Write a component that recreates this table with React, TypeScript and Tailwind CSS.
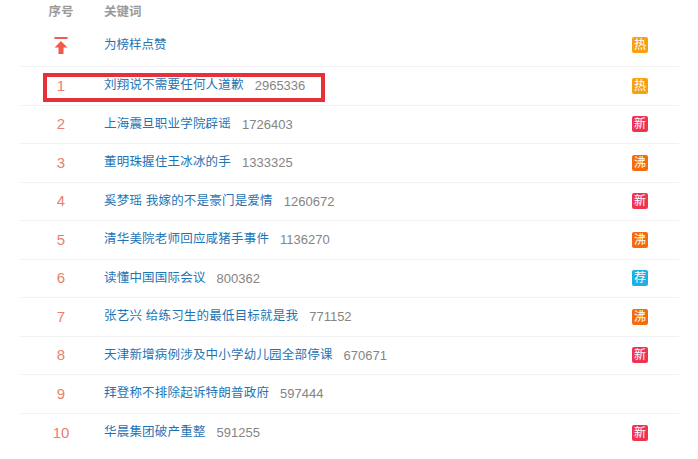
import React from "react";

type Row = { rank: string; kw: string; num?: string; tag?: "热" | "新" | "沸" | "荐" };

const rows: Row[] = [
  { rank: "1", kw: "刘翔说不需要任何人道歉", num: "2965336", tag: "热" },
  { rank: "2", kw: "上海震旦职业学院辟谣", num: "1726403", tag: "新" },
  { rank: "3", kw: "董明珠握住王冰冰的手", num: "1333325", tag: "沸" },
  { rank: "4", kw: "奚梦瑶 我嫁的不是豪门是爱情", num: "1260672", tag: "新" },
  { rank: "5", kw: "清华美院老师回应咸猪手事件", num: "1136270", tag: "沸" },
  { rank: "6", kw: "读懂中国国际会议", num: "800362", tag: "荐" },
  { rank: "7", kw: "张艺兴 给练习生的最低目标就是我", num: "771152", tag: "沸" },
  { rank: "8", kw: "天津新增病例涉及中小学幼儿园全部停课", num: "670671", tag: "新" },
  { rank: "9", kw: "拜登称不排除起诉特朗普政府", num: "597444" },
  { rank: "10", kw: "华晨集团破产重整", num: "591255", tag: "新" },
];

function Tag({ t }: { t?: Row["tag"] }) {
  if (!t) return null;
  const cls =
    t === "热"
      ? "bg-[#f7a10f]"
      : t === "新"
      ? "bg-[#ee3450]"
      : t === "沸"
      ? "bg-[#f56b10]"
      : "bg-[#1bb0e6]";
  return (
    <span
      className={`${cls} inline-flex h-[16px] w-[16px] items-center justify-center rounded-[2px] text-[12px] leading-none text-white`}
    >
      {t}
    </span>
  );
}

function TopIcon() {
  return (
    <svg width="14" height="18" viewBox="0 0 14 18">
      <rect x="0.5" y="0" width="13" height="2" fill="#f4594c" />
      <path d="M7 4 L13.5 10.5 L9.5 10.5 L9.5 17 L4.5 17 L4.5 10.5 L0.5 10.5 Z" fill="#f4594c" />
    </svg>
  );
}

export default function App() {
  const font = { fontFamily: '"Liberation Sans", "Noto Sans CJK SC", sans-serif' };
  return (
    <div className="relative h-[459px] w-[698px] overflow-hidden bg-white" style={font}>
      <div className="ml-[20px] w-[659px]">
        <div className="flex h-[25px] items-center text-[12.5px] font-bold text-[#9a9a9a]">
          <div className="w-[84px] pr-[2px] text-center">序号</div>
          <div>关键词</div>
        </div>
        <div className="flex h-[42px] items-center border-b border-[#f2f2f2] pb-[1px]">
          <div className="flex w-[84px] justify-center pr-[2px] pt-[1px]">
            <TopIcon />
          </div>
          <div className="flex-1 text-[12.5px] text-[#1f74b4]">为榜样点赞</div>
          <div className="flex w-[60px] justify-end pr-[31px]">
            <Tag t="热" />
          </div>
        </div>
        {rows.map((r) => (
          <div
            key={r.rank}
            className="flex h-[38.5px] items-center border-b border-[#f2f2f2] last:border-b-0"
          >
            <div className="w-[84px] pr-[2px] text-center text-[15px] text-[#eb7f6d]">{r.rank}</div>
            <div className="flex flex-1 items-center text-[12.5px]">
              <span className="tracking-[0.2px] text-[#1f74b4]">{r.kw}</span>
              {r.num && <span className="ml-[11px] text-[13px] text-[#858585]">{r.num}</span>}
            </div>
            <div className="flex w-[60px] justify-end pr-[31px]">
              <Tag t={r.tag} />
            </div>
          </div>
        ))}
      </div>
      <div className="pointer-events-none absolute left-[43px] top-[73px] h-[29px] w-[282px] border-[4px] border-[#e8303a]" />
    </div>
  );
}
